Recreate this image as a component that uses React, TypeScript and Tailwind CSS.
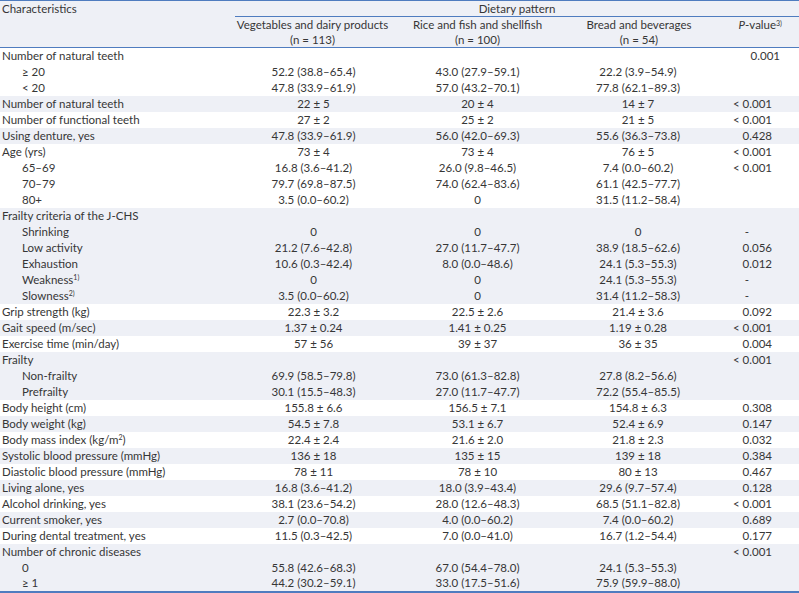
type Row = {
  label: string;
  sup?: string;
  indent?: boolean;
  a?: string;
  b?: string;
  c?: string;
  p?: string;
  shade: boolean;
  supInLabel?: "m2";
};

const groups: { shade: boolean; rows: Omit<Row, "shade">[] }[] = [
  {
    shade: false,
    rows: [
      { label: "Number of natural teeth", p: "0.001" },
      { label: "≥ 20", indent: true, a: "52.2 (38.8–65.4)", b: "43.0 (27.9–59.1)", c: "22.2 (3.9–54.9)" },
      { label: "< 20", indent: true, a: "47.8 (33.9–61.9)", b: "57.0 (43.2–70.1)", c: "77.8 (62.1–89.3)" },
    ],
  },
  { shade: true, rows: [{ label: "Number of natural teeth", a: "22 ± 5", b: "20 ± 4", c: "14 ± 7", p: "< 0.001" }] },
  { shade: false, rows: [{ label: "Number of functional teeth", a: "27 ± 2", b: "25 ± 2", c: "21 ± 5", p: "< 0.001" }] },
  { shade: true, rows: [{ label: "Using denture, yes", a: "47.8 (33.9–61.9)", b: "56.0 (42.0–69.3)", c: "55.6 (36.3–73.8)", p: "0.428" }] },
  {
    shade: false,
    rows: [
      { label: "Age (yrs)", a: "73 ± 4", b: "73 ± 4", c: "76 ± 5", p: "< 0.001" },
      { label: "65–69", indent: true, a: "16.8 (3.6–41.2)", b: "26.0 (9.8–46.5)", c: "7.4 (0.0–60.2)", p: "< 0.001" },
      { label: "70–79", indent: true, a: "79.7 (69.8–87.5)", b: "74.0 (62.4–83.6)", c: "61.1 (42.5–77.7)" },
      { label: "80+", indent: true, a: "3.5 (0.0–60.2)", b: "0", c: "31.5 (11.2–58.4)" },
    ],
  },
  {
    shade: true,
    rows: [
      { label: "Frailty criteria of the J-CHS" },
      { label: "Shrinking", indent: true, a: "0", b: "0", c: "0", p: "-" },
      { label: "Low activity", indent: true, a: "21.2 (7.6–42.8)", b: "27.0 (11.7–47.7)", c: "38.9 (18.5–62.6)", p: "0.056" },
      { label: "Exhaustion", indent: true, a: "10.6 (0.3–42.4)", b: "8.0 (0.0–48.6)", c: "24.1 (5.3–55.3)", p: "0.012" },
      { label: "Weakness", sup: "1)", indent: true, a: "0", b: "0", c: "24.1 (5.3–55.3)", p: "-" },
      { label: "Slowness", sup: "2)", indent: true, a: "3.5 (0.0–60.2)", b: "0", c: "31.4 (11.2–58.3)", p: "-" },
    ],
  },
  { shade: false, rows: [{ label: "Grip strength (kg)", a: "22.3 ± 3.2", b: "22.5 ± 2.6", c: "21.4 ± 3.6", p: "0.092" }] },
  { shade: true, rows: [{ label: "Gait speed (m/sec)", a: "1.37 ± 0.24", b: "1.41 ± 0.25", c: "1.19 ± 0.28", p: "< 0.001" }] },
  { shade: false, rows: [{ label: "Exercise time (min/day)", a: "57 ± 56", b: "39 ± 37", c: "36 ± 35", p: "0.004" }] },
  {
    shade: true,
    rows: [
      { label: "Frailty", p: "< 0.001" },
      { label: "Non-frailty", indent: true, a: "69.9 (58.5–79.8)", b: "73.0 (61.3–82.8)", c: "27.8 (8.2–56.6)" },
      { label: "Prefrailty", indent: true, a: "30.1 (15.5–48.3)", b: "27.0 (11.7–47.7)", c: "72.2 (55.4–85.5)" },
    ],
  },
  { shade: false, rows: [{ label: "Body height (cm)", a: "155.8 ± 6.6", b: "156.5 ± 7.1", c: "154.8 ± 6.3", p: "0.308" }] },
  { shade: true, rows: [{ label: "Body weight (kg)", a: "54.5 ± 7.8", b: "53.1 ± 6.7", c: "52.4 ± 6.9", p: "0.147" }] },
  { shade: false, rows: [{ label: "Body mass index (kg/m", supInLabel: "m2", a: "22.4 ± 2.4", b: "21.6 ± 2.0", c: "21.8 ± 2.3", p: "0.032" }] },
  { shade: true, rows: [{ label: "Systolic blood pressure (mmHg)", a: "136 ± 18", b: "135 ± 15", c: "139 ± 18", p: "0.384" }] },
  { shade: false, rows: [{ label: "Diastolic blood pressure (mmHg)", a: "78 ± 11", b: "78 ± 10", c: "80 ± 13", p: "0.467" }] },
  { shade: true, rows: [{ label: "Living alone, yes", a: "16.8 (3.6–41.2)", b: "18.0 (3.9–43.4)", c: "29.6 (9.7–57.4)", p: "0.128" }] },
  { shade: false, rows: [{ label: "Alcohol drinking, yes", a: "38.1 (23.6–54.2)", b: "28.0 (12.6–48.3)", c: "68.5 (51.1–82.8)", p: "< 0.001" }] },
  { shade: true, rows: [{ label: "Current smoker, yes", a: "2.7 (0.0–70.8)", b: "4.0 (0.0–60.2)", c: "7.4 (0.0–60.2)", p: "0.689" }] },
  { shade: false, rows: [{ label: "During dental treatment, yes", a: "11.5 (0.3–42.5)", b: "7.0 (0.0–41.0)", c: "16.7 (1.2–54.4)", p: "0.177" }] },
  {
    shade: true,
    rows: [
      { label: "Number of chronic diseases", p: "< 0.001" },
      { label: "0", indent: true, a: "55.8 (42.6–68.3)", b: "67.0 (54.4–78.0)", c: "24.1 (5.3–55.3)" },
      { label: "≥ 1", indent: true, a: "44.2 (30.2–59.1)", b: "33.0 (17.5–51.6)", c: "75.9 (59.9–88.0)" },
    ],
  },
];

const rows: Row[] = groups.flatMap((g) => g.rows.map((r) => ({ ...r, shade: g.shade })));

function pClass(p: string | undefined, i: number) {
  if (p === "-") return "text-right pr-[50px]";
  if (i === 0) return "text-right pr-[19px]";
  return "text-right pr-[27px]";
}

export default function App() {
  return (
    <div className="w-[799px] h-[593px] bg-white text-[#363636] text-[11.5px] leading-none [font-family:Lato,sans-serif]">
      <table className="w-full border-collapse table-fixed">
        <colgroup>
          <col className="w-[235px]" />
          <col className="w-[155px]" />
          <col className="w-[175px]" />
          <col className="w-[148px]" />
          <col className="w-[86px]" />
        </colgroup>
        <thead className="bg-[#eef0f6]">
          <tr className="border-t border-[#4f7cbf]">
            <th rowSpan={2} className="align-top text-left font-normal pl-[2px] pt-[2px]">
              Characteristics
            </th>
            <th colSpan={4} className="h-[16px] font-normal text-center border-b border-[#4f7cbf]">
              Dietary pattern
            </th>
          </tr>
          <tr className="border-b border-[#4f7cbf]">
            <th className="font-normal text-center h-[30px] leading-[15px] whitespace-nowrap">
              Vegetables and dairy products
              <br />
              (n = 113)
            </th>
            <th className="font-normal text-center leading-[15px] whitespace-nowrap">
              Rice and fish and shellfish
              <br />
              (n = 100)
            </th>
            <th className="font-normal text-center leading-[15px] whitespace-nowrap">
              Bread and beverages
              <br />
              (n = 54)
            </th>
            <th className="font-normal text-right pr-[17px] align-top pt-[2px] whitespace-nowrap">
              <i>P</i>-value<sup className="text-[7px]">3)</sup>
            </th>
          </tr>
        </thead>
        <tbody className="border-b-2 border-[#4f7cbf]">
          {rows.map((r, i) => (
            <tr key={i} className={r.shade ? "bg-[#eef0f6] h-[16px]" : "bg-white h-[16px]"}>
              <td className={r.indent ? "pl-[22px] whitespace-nowrap" : "pl-[2px] whitespace-nowrap"}>
                {r.label}
                {r.supInLabel && (
                  <>
                    <sup className="text-[7px] leading-none">2</sup>)
                  </>
                )}
                {r.sup && <sup className="text-[7px] leading-none">{r.sup}</sup>}
              </td>
              <td className="text-center pl-[2px]">{r.a}</td>
              <td className="text-center">{r.b}</td>
              <td className="text-center pr-[2px]">{r.c}</td>
              <td className={pClass(r.p, i)}>{r.p}</td>
            </tr>
          ))}
        </tbody>
      </table>
    </div>
  );
}
